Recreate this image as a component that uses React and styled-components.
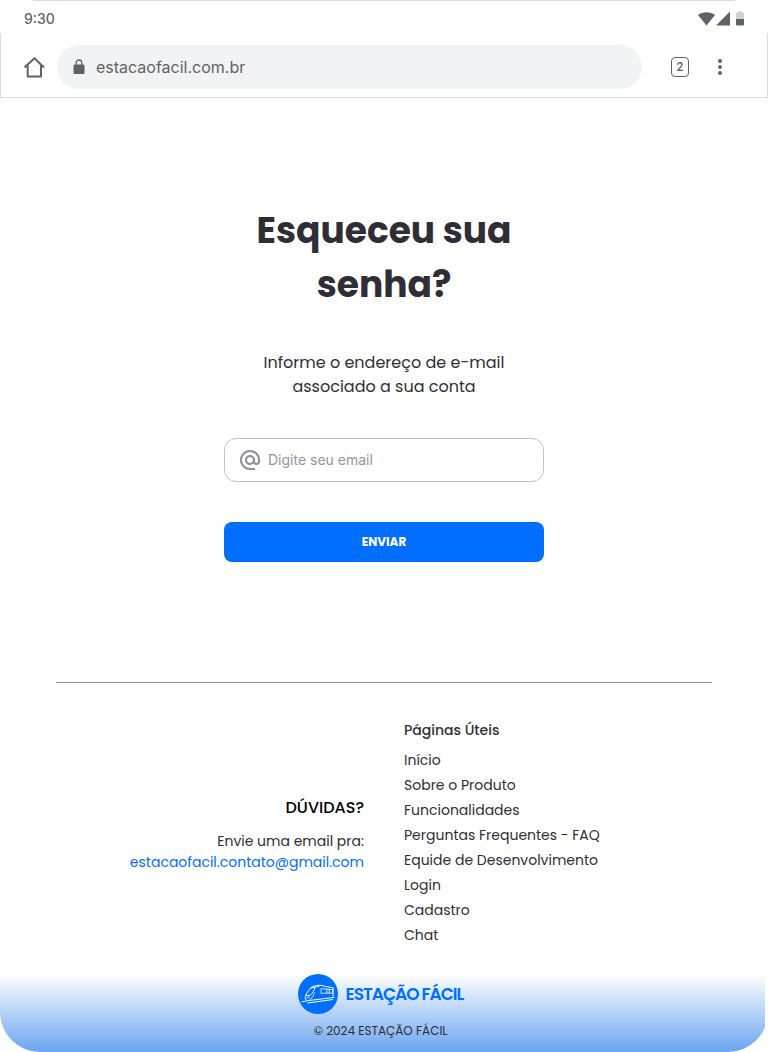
import React from 'react';
import styled, { createGlobalStyle } from 'styled-components';
import { MdAlternateEmail } from 'react-icons/md';

const GlobalStyle = createGlobalStyle`
  *, *::before, *::after { box-sizing: border-box; }
  body {
    margin: 0;
    background: #fff;
    color: #2f2e36;
    font-family: Poppins, Inter, "Liberation Sans", sans-serif;
  }
  h1, h2, p, ul { margin: 0; padding: 0; }
  ul { list-style: none; }
  button, input { font: inherit; margin: 0; }
`;

const Screen = styled.div`
  min-height: 100vh;
  display: flex;
  flex-direction: column;
  overflow: hidden;
  border-radius: 0 0 40px 40px;
`;

const BrowserBar = styled.header`
  height: 98px;
  border-bottom: 1px solid #dadce0;
  background:
    linear-gradient(#dadce0, #dadce0) center top / calc(100% - 66px) 1px no-repeat,
    linear-gradient(#dadce0, #dadce0) left bottom / 1px calc(100% - 33px) no-repeat,
    linear-gradient(#dadce0, #dadce0) right bottom / 1px calc(100% - 33px) no-repeat,
    #fff;
  color: #5f6368;
  font-family: Inter, "Liberation Sans", sans-serif;
`;

const StatusBar = styled.div`
  height: 37px;
  padding: 0 24px;
  display: flex;
  align-items: center;
  justify-content: space-between;
  font-size: 14px;
  font-weight: 500;
`;

const Toolbar = styled.div`
  height: 60px;
  padding: 0 37px 0 23px;
  display: flex;
  align-items: center;
`;

const IconButton = styled.button`
  width: 22px;
  height: 24px;
  padding: 0;
  border: 0;
  background: none;
  color: inherit;
  display: flex;
  align-items: center;
  justify-content: center;
  cursor: pointer;
`;

const AddressBox = styled.label`
  flex: 1;
  height: 44px;
  margin: 0 29px 0 12px;
  padding: 0 16px;
  display: flex;
  align-items: center;
  gap: 11px;
  border-radius: 22px;
  background: #f1f3f4;
`;

const AddressInput = styled.input`
  flex: 1;
  min-width: 0;
  padding: 0;
  border: 0;
  outline: 0;
  background: none;
  color: #5f6368;
  font-size: 16px;
`;

const TabCount = styled.button`
  width: 18px;
  height: 20px;
  margin-right: 20px;
  padding: 0;
  border: 1px solid #5f6368;
  border-radius: 4px;
  background: none;
  color: inherit;
  font-family: Roboto, sans-serif;
  font-size: 12px;
  line-height: 18px;
  font-weight: 500;
  text-align: center;
`;

const Main = styled.main`
  padding: 106px 24px 0;
  display: flex;
  flex-direction: column;
  align-items: center;
  text-align: center;
`;

const Title = styled.h1`
  max-width: 320px;
  font-size: 36px;
  line-height: 54px;
  font-weight: 700;
`;

const Lead = styled.p`
  max-width: 256px;
  margin-top: 39px;
  font-size: 16px;
  line-height: 24px;
`;

const Form = styled.form`
  width: 100%;
  max-width: 320px;
  margin-top: 39px;
  display: flex;
  flex-direction: column;
  gap: 40px;
`;

const Field = styled.label`
  height: 44px;
  padding: 0 13px 1px;
  display: flex;
  align-items: center;
  gap: 6px;
  border: 1px solid #c3c2ca;
  border-radius: 12px;
  color: #8e8d98;
`;

const FieldInput = styled.input`
  flex: 1;
  min-width: 0;
  padding: 0;
  border: 0;
  outline: 0;
  background: none;
  color: #2f2e36;
  font-family: Inter, "Liberation Sans", sans-serif;
  font-size: 14px;

  &::placeholder { color: #95949e; opacity: 1; }
`;

const SubmitButton = styled.button`
  height: 40px;
  border: 0;
  border-radius: 8px;
  background: #006fff;
  color: #fff;
  font-size: 12px;
  font-weight: 700;
  cursor: pointer;
`;

const Footer = styled.footer`
  flex: 1;
  margin-top: 120px;
  display: flex;
  flex-direction: column;
`;

const FooterColumns = styled.div`
  margin: 0 56px;
  padding: 35px 0 26px;
  display: grid;
  grid-template-columns: 1fr 1fr;
  gap: 40px;
  align-items: center;
  border-top: 1px solid #8e8e92;
  font-size: 14px;
`;

const Contact = styled.section`
  padding-top: 3px;
  text-align: right;
  line-height: 21px;
`;

const ContactTitle = styled.h2`
  margin-bottom: 11px;
  color: #000;
  font-size: 16px;
  line-height: 24px;
  font-weight: 500;
`;

const MailLink = styled.a`
  color: #006fff;
  text-decoration: none;
`;

const LinksTitle = styled.h2`
  margin-bottom: 5px;
  font-size: 14px;
  line-height: 25px;
  font-weight: 500;
`;

const PageLink = styled.a`
  color: inherit;
  line-height: 25px;
  text-decoration: none;
  display: block;
`;

const BrandBand = styled.div`
  flex: 1;
  min-height: 78px;
  margin-right: 3px;
  padding-right: 4px;
  display: flex;
  flex-direction: column;
  align-items: center;
  background: linear-gradient(#fff, #6ba5f0);
`;

const Brand = styled.a`
  display: flex;
  align-items: center;
  gap: 8px;
  color: #006fff;
  font-size: 17px;
  line-height: 24px;
  font-weight: 600;
  letter-spacing: -1px;
  text-decoration: none;
`;

const Copyright = styled.p`
  margin-top: 8px;
  font-size: 12px;
  line-height: 18px;
`;

const pages = [
  'Início',
  'Sobre o Produto',
  'Funcionalidades',
  'Perguntas Frequentes - FAQ',
  'Equide de Desenvolvimento',
  'Login',
  'Cadastro',
  'Chat',
];

function StatusIcons() {
  return (
    <svg width="48" height="16" viewBox="0 0 48 16" fill="#5f6368" aria-hidden="true">
      <path d="M2 4C6.500 0.300 14.500 0.300 19 4L10.500 14.500Z" />
      <path d="M20 14.500H34V0.500Z" />
      <path d="M40 2.500q0-1 1-1h1V0.500h4v1h1q1 0 1 1V8h-8z" fill="#cfd0d2" />
      <path d="M40 8h8v5.500q0 1-1 1h-6q-1 0-1-1z" />
    </svg>
  );
}

function HomeIcon() {
  return (
    <svg width="22" height="22" viewBox="0 0 22 22" fill="none" stroke="#5f6368" strokeWidth="2" aria-hidden="true">
      <path d="M1.500 11.500 11.500 2.200 21 11.500M4.700 9.500V20.500H18V9.500" strokeLinejoin="round" />
    </svg>
  );
}

function LockIcon() {
  return (
    <svg width="12" height="16" viewBox="0 0 12 16" aria-hidden="true">
      <rect x="0.500" y="5.500" width="11" height="9.500" rx="1.200" fill="#5f6368" />
      <path d="M3.200 6V3.800a2.800 2.800 0 0 1 5.600 0V6" fill="none" stroke="#5f6368" strokeWidth="1.300" />
    </svg>
  );
}

function MoreIcon() {
  return (
    <svg width="4" height="18" viewBox="0 0 4 18" fill="#5f6368" aria-hidden="true">
      <circle cx="2" cy="3" r="2" />
      <circle cx="2" cy="9" r="2" />
      <circle cx="2" cy="15" r="2" />
    </svg>
  );
}

function TrainLogo() {
  return (
    <svg width="40" height="40" viewBox="0 0 41 41" fill="none" stroke="#fff" strokeLinecap="round" strokeLinejoin="round" aria-hidden="true">
      <circle cx="20.500" cy="20.500" r="20.500" fill="#006fff" stroke="none" />
      <path d="M4 28.500 11 27.200 37 24M10 29.700 35.500 26.200" strokeWidth="1" />
      <path d="M8.500 27C6.500 25 7.500 21.500 10.500 17.500C12.500 14.300 14.500 12.600 17 12.200L22 11.500 36 14.200V22.500" strokeWidth="1" />
      <path d="M13 14.500 17.500 13.500C16.500 17 15 19.500 12.500 21.800L8.700 22" strokeWidth="1" />
      <path d="M17.500 13.500 22 12.500M17 19C16 22 14.500 24.500 12 26.800M9 24.500 12 23.500" strokeWidth="0.800" />
      <path d="M24 15 35.500 16V19.500L24 19.800ZM29.500 15.500V19.700M32 15.700V19.700" strokeWidth="0.800" />
    </svg>
  );
}

export default function App() {
  return (
    <>
      <GlobalStyle />
      <Screen>
        <BrowserBar>
          <StatusBar>
            <span>9:30</span>
            <StatusIcons />
          </StatusBar>
          <Toolbar>
            <IconButton type="button" aria-label="Página inicial"><HomeIcon /></IconButton>
            <AddressBox>
              <LockIcon />
              <AddressInput type="text" aria-label="Endereço" defaultValue="estacaofacil.com.br" />
            </AddressBox>
            <TabCount type="button" aria-label="2 abas abertas">2</TabCount>
            <IconButton type="button" aria-label="Mais opções"><MoreIcon /></IconButton>
          </Toolbar>
        </BrowserBar>

        <Main>
          <Title>Esqueceu sua senha?</Title>
          <Lead>Informe o endereço de e-mail associado a sua conta</Lead>
          <Form onSubmit={(event) => event.preventDefault()}>
            <Field>
              <MdAlternateEmail size={24} aria-hidden="true" />
              <FieldInput type="email" aria-label="Email" placeholder="Digite seu email" />
            </Field>
            <SubmitButton type="submit">ENVIAR</SubmitButton>
          </Form>
        </Main>

        <Footer>
          <FooterColumns>
            <Contact>
              <ContactTitle>DÚVIDAS?</ContactTitle>
              <p>Envie uma email pra:</p>
              <MailLink href="mailto:estacaofacil.contato@gmail.com">estacaofacil.contato@gmail.com</MailLink>
            </Contact>
            <nav aria-labelledby="paginas-uteis">
              <LinksTitle id="paginas-uteis">Páginas Úteis</LinksTitle>
              <ul>
                {pages.map((page) => (
                  <li key={page}><PageLink href="#">{page}</PageLink></li>
                ))}
              </ul>
            </nav>
          </FooterColumns>
          <BrandBand>
            <Brand href="#"><TrainLogo />ESTAÇÃO FÁCIL</Brand>
            <Copyright>© 2024 ESTAÇÃO FÁCIL</Copyright>
          </BrandBand>
        </Footer>
      </Screen>
    </>
  );
}
